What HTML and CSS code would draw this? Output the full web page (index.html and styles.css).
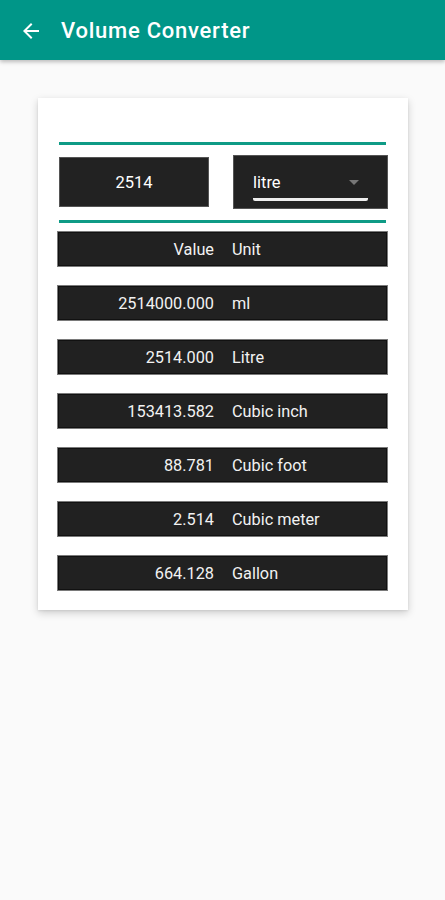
FILE: index.html
```html
<!DOCTYPE html>
<html>
<head>
<meta charset="utf-8">
<link rel="stylesheet" href="styles.css">
</head>
<body>
<header class="appbar">
  <svg class="back" width="24" height="24" viewBox="0 0 24 24"><path d="M20 11H7.83l5.59-5.59L12 4l-8 8 8 8 1.41-1.41L7.83 13H20v-2z" fill="#fff"/></svg>
  <h1 class="title">Volume Converter</h1>
</header>
<main class="content">
  <section class="card">
    <div class="rule"></div>
    <div class="inputs">
      <div class="numbox">2514</div>
      <div class="selbox">
        <div class="sel">
          <span>litre</span>
          <span class="caret"></span>
        </div>
      </div>
    </div>
    <div class="rule rule2"></div>
    <div class="rows">
      <div class="row"><span class="val">Value</span><span class="unit">Unit</span></div>
      <div class="row"><span class="val">2514000.000</span><span class="unit">ml</span></div>
      <div class="row"><span class="val">2514.000</span><span class="unit">Litre</span></div>
      <div class="row"><span class="val">153413.582</span><span class="unit">Cubic inch</span></div>
      <div class="row"><span class="val">88.781</span><span class="unit">Cubic foot</span></div>
      <div class="row"><span class="val">2.514</span><span class="unit">Cubic meter</span></div>
      <div class="row"><span class="val">664.128</span><span class="unit">Gallon</span></div>
    </div>
  </section>
</main>
</body>
</html>
```
FILE: styles.css
```css
* { box-sizing: border-box; }
html, body { margin: 0; padding: 0; }
body {
  width: 445px;
  height: 900px;
  background: #fafafa;
  font-family: Roboto, "Liberation Sans", sans-serif;
  overflow: hidden;
}
.appbar {
  height: 60px;
  background: #009688;
  display: flex;
  align-items: center;
  padding-left: 19px;
  box-shadow: 0 2px 4px rgba(0,0,0,0.25);
  position: relative;
  z-index: 1;
}
.back { display: block; margin-top: 1px; }
.title {
  margin: 0 0 0 18px;
  color: #fff;
  font-size: 22px;
  font-weight: 500;
  letter-spacing: 0.75px;
}
.content {
  padding: 38px 37px 0 38px;
}
.card {
  background: #fff;
  width: 370px;
  height: 512px;
  box-shadow: 0 3px 8px rgba(0,0,0,0.18), 0 1px 2px rgba(0,0,0,0.08);
  padding: 44px 20px 0 19px;
}
.rule {
  height: 3px;
  background: #0e9b86;
  margin: 0 2px 0 2px;
}
.inputs {
  display: flex;
  justify-content: space-between;
  align-items: center;
  margin: 10px 0 11px 2px;
  height: 54px;
}
.numbox {
  width: 150px;
  height: 50px;
  background: #222;
  border: 1px solid #555;
  color: #fff;
  display: flex;
  align-items: center;
  justify-content: center;
  font-size: 16.5px;
}
.selbox {
  width: 155px;
  height: 54px;
  background: #222;
  border: 1px solid #555;
  padding: 0 19px 0 19px;
  display: flex;
  align-items: flex-end;
}
.sel {
  width: 100%;
  height: 44px;
  border-bottom: 3px solid #eee;
  border-radius: 0 0 2px 2px;
  margin-bottom: 7px;
  display: flex;
  align-items: center;
  justify-content: space-between;
  color: #fff;
  font-size: 16.5px;
  padding-top: 10px;
}
.caret {
  width: 0;
  height: 0;
  border-left: 5px solid transparent;
  border-right: 5px solid transparent;
  border-top: 5px solid #777;
  margin-right: 9px;
}
.rule2 { margin-bottom: 8px; }
.rows {
  display: flex;
  flex-direction: column;
  gap: 18px;
}
.row {
  height: 36px;
  background: #212121;
  border: 1px solid #7a7a7a;
  box-shadow: inset 0 0 0 1px #111;
  display: flex;
  align-items: center;
  color: #f2f2f2;
  font-size: 16.3px;
}
.val {
  width: 156px;
  text-align: right;
}
.unit {
  margin-left: 18px;
}
```
